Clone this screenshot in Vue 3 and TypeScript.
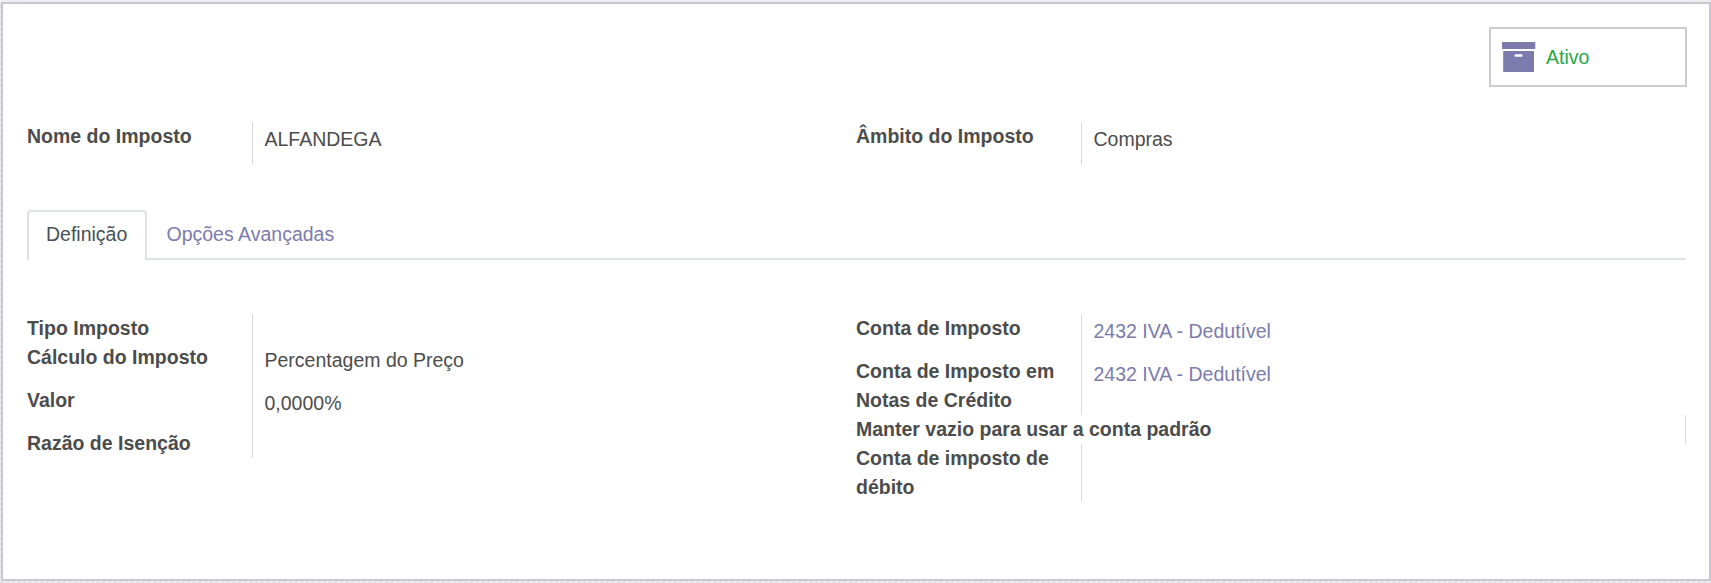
<script setup lang="ts">
interface Field {
  label: string
  value?: string
  link?: boolean
  compact?: boolean
  full?: boolean
}

const header: Field[][] = [
  [{ label: 'Nome do Imposto', value: 'ALFANDEGA' }],
  [{ label: 'Âmbito do Imposto', value: 'Compras' }],
]

const definition: Field[][] = [
  [
    { label: 'Tipo Imposto', compact: true },
    { label: 'Cálculo do Imposto', value: 'Percentagem do Preço' },
    { label: 'Valor', value: '0,0000%' },
    { label: 'Razão de Isenção', compact: true },
  ],
  [
    { label: 'Conta de Imposto', value: '2432 IVA - Dedutível', link: true },
    { label: 'Conta de Imposto em Notas de Crédito', value: '2432 IVA - Dedutível', link: true },
    { label: 'Manter vazio para usar a conta padrão', full: true },
    { label: 'Conta de imposto de débito' },
  ],
]
</script>

<template>
  <main class="page">
    <section class="sheet">
      <div class="button-box">
        <button class="stat" type="button">
          <svg class="archive" width="34" height="30" viewBox="0 0 34 30" aria-hidden="true">
            <path d="M.5 0H32.800q.5 0 .5.500V6.500q0 .5-.5.500H.5Q0 7 0 6.500V.5Q0 0 .5 0Z" />
            <path fill-rule="evenodd" d="M1.200 9H32V29.500q0 .5-.5.500H1.700q-.5 0-.5-.5ZM13.600 12.200q-1.100 0-1.100 1.300t1.100 1.300h5.800q1.100 0 1.100-1.300t-1.100-1.300Z" />
          </svg>
          <span>Ativo</span>
        </button>
      </div>

      <div class="groups header">
        <dl v-for="(group, g) in header" :key="g" class="group">
          <div v-for="f in group" :key="f.label" class="row">
            <dt>{{ f.label }}</dt>
            <dd>{{ f.value }}</dd>
          </div>
        </dl>
      </div>

      <nav class="tabs">
        <a class="tab active">Definição</a>
        <a class="tab">Opções Avançadas</a>
      </nav>

      <div class="groups">
        <dl v-for="(group, g) in definition" :key="g" class="group">
          <div
            v-for="f in group"
            :key="f.label"
            class="row"
            :class="{ compact: f.compact, full: f.full }"
          >
            <dt>{{ f.label }}</dt>
            <dd><a v-if="f.link" class="link">{{ f.value }}</a><template v-else>{{ f.value }}</template></dd>
          </div>
        </dl>
      </div>
    </section>
  </main>
</template>

<style>
body {
  margin: 0;
}
</style>

<style scoped>
.page {
  box-sizing: border-box;
  height: 583px;
  padding: 2px 0 2px 1px;
  background: linear-gradient(#eeeef0 0 2px, transparent 2px),
    repeating-linear-gradient(135deg, #e2e2e4 0 2px, #eeeef0 2px 4px);
  font-family: "Liberation Sans", Arial, sans-serif;
  font-size: 19.5px;
  line-height: 29px;
  color: #4c4c4c;
}

.sheet {
  box-sizing: border-box;
  height: 579px;
  padding: 23px 22px 0 24px;
  border: 2px solid #c8c8d3;
  background: #fff;
}

.button-box {
  display: flex;
  justify-content: flex-end;
}

.stat {
  box-sizing: border-box;
  display: flex;
  align-items: center;
  gap: 10px;
  width: 198px;
  height: 60px;
  padding: 0 0 0 11px;
  border: 2px solid #ccc;
  background: #fff;
  font: inherit;
  color: #28a745;
}

.archive {
  fill: #7c7bad;
}

.groups {
  display: grid;
  grid-template-columns: 829px 830px;
}

.header {
  margin-top: 35px;
}

.group {
  margin: 0;
  align-self: start;
}

.row {
  display: grid;
  grid-template-columns: 225px 1fr;
  grid-template-rows: 1fr;
  min-height: 43px;
}

.row.compact,
.row.full {
  min-height: 29px;
}

.row.full {
  grid-template-columns: 1fr 1px;
}

dt {
  padding-right: 20px;
  font-weight: 700;
}

dd {
  margin: 0;
  padding: 3px 0 0 11.5px;
  border-left: 1px solid #d9d9d9;
}

dd:empty {
  padding: 0;
}

.full dd {
  padding: 0;
}

.link {
  color: #7c7bad;
}

.tabs {
  display: flex;
  box-sizing: border-box;
  height: 50px;
  margin: 45px 1px 54px 0;
  border-bottom: 2px solid #dee2e6;
}

.tab {
  box-sizing: border-box;
  height: 50px;
  padding: 8px 17.5px;
  border: 2px solid transparent;
  border-bottom: 0;
  color: #7c7bad;
}

.tab.active {
  width: 120px;
  padding: 8px 17px;
  border-color: #dee2e6;
  border-radius: 4px 4px 0 0;
  background: #fff;
  color: #495057;
}
</style>
